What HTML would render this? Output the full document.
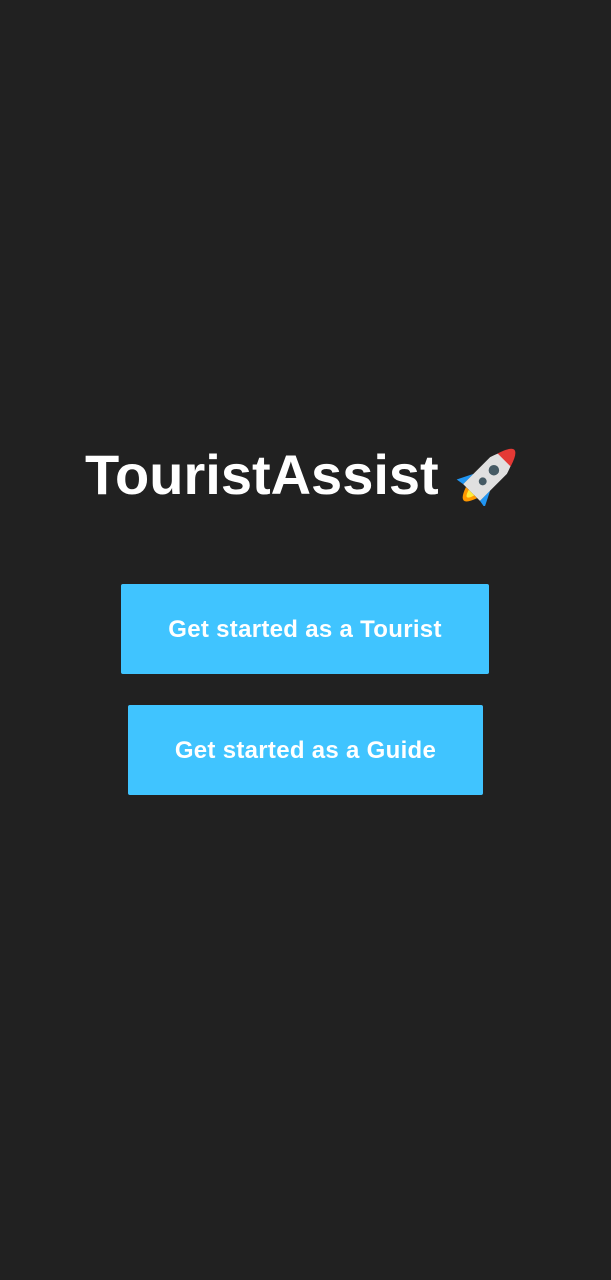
<!DOCTYPE html>
<html><head><meta charset="utf-8"><style>
html,body{margin:0;padding:0;background:#212121;width:611px;height:1280px;overflow:hidden;font-family:"Liberation Sans",sans-serif;}
.title{position:absolute;left:85px;top:443px;font-size:56px;font-weight:bold;color:#fff;white-space:nowrap;line-height:64px;}
.btn{position:absolute;background:#40c4ff;color:#fff;font-size:24px;font-weight:bold;letter-spacing:0.3px;display:flex;align-items:center;justify-content:center;border-radius:2px;padding-top:2px;box-sizing:border-box;}
</style></head><body>
<div class="title">TouristAssist</div>
<svg style="position:absolute;left:456px;top:440px" width="68" height="66" viewBox="0 0 62 60">
<g transform="translate(32,30) rotate(45) scale(1.2)">
<path d="M-9 10 L-15 22 L-9 21 Z" fill="#2196f3"/>
<path d="M9 10 L15 22 L9 21 Z" fill="#2196f3"/>
<path d="M-6 21 Q0 38 6 21 Z" fill="#ff9800"/>
<path d="M-3 21 Q0 31 3 21 Z" fill="#ffeb3b"/>
<path d="M-9 21 L-9 -8 Q0 -36 9 -8 L9 21 Z" fill="#e0e0e0"/>
<path d="M-7 -14 Q0 -36 7 -14 Z" fill="#e53935"/>
<circle cx="0" cy="-3" r="4" fill="#455a64"/>
<circle cx="0" cy="9" r="3" fill="#455a64"/>
</g></svg>
<div class="btn" style="left:121px;top:584px;width:368px;height:90px;">Get started as a Tourist</div>
<div class="btn" style="left:128px;top:705px;width:355px;height:90px;">Get started as a Guide</div>
</body></html>
